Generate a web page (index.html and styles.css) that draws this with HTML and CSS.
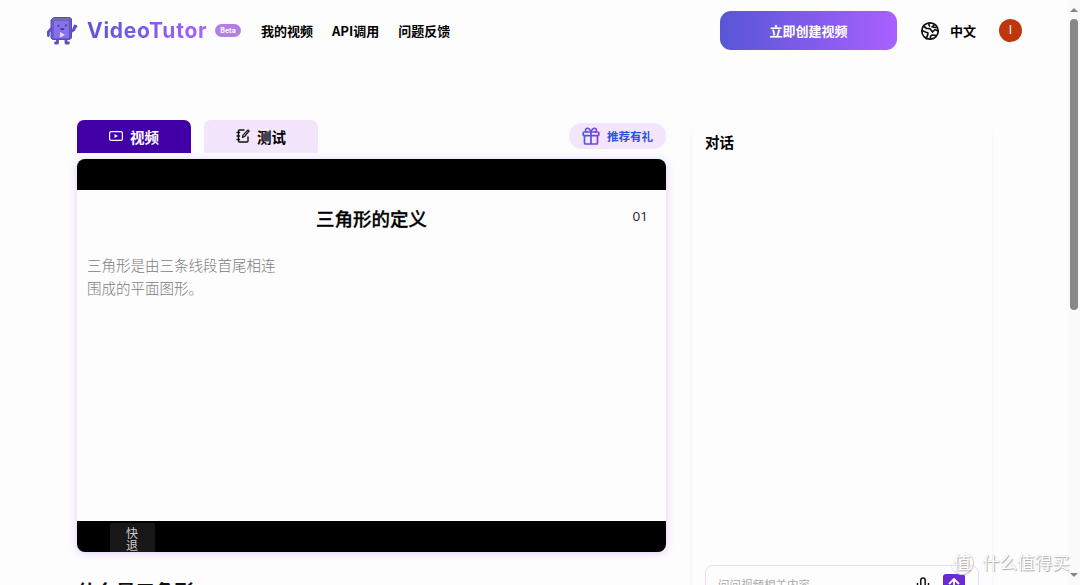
FILE: index.html
```html
<!DOCTYPE html>
<html lang="zh-CN">
<head>
  <meta charset="UTF-8">
  <title>VideoTutor</title>
  <link rel="stylesheet" href="styles.css">
</head>
<body>
  <div class="page">
    <header class="header">
      <a class="logo">
        <svg class="mascot" viewBox="0 0 32 30" width="32" height="30">
          <g fill="none" stroke="#5b4fc4" stroke-width="2.8" stroke-linecap="round" stroke-linejoin="round">
            <path d="M5 13l-2.600 3v3.500" />
            <path d="M25 15.500l3-2 1-3.500M28 12l2-1.500" />
            <path d="M11.500 23v4H9.500M20 23v4h2.500" />
          </g>
          <path d="M5 4l3-2.500h16l1.500 1.500v19l-2 1.500H6.500L5 22z" fill="#6a5bd0" stroke="#5a4bb8" stroke-width="1" />
          <path d="M8 2.200h15.500v2H6.500z" fill="#78709c" />
          <path d="M8 5h15v17H8z" fill="#8b70eb" />
          <path d="M23.500 3.500v19" stroke="#6553c5" stroke-width="1.300" />
          <path d="M12.500 9v1.800M20 8.500v1.800" stroke="#40338e" stroke-width="1.700" />
          <path d="M14 12.200c1 2.800 4 2.500 4.600 0z" fill="#40338e" />
          <path d="M14 16l5 2.800-5 3z" fill="#e0d5ff" />
        </svg>
        <span class="logo-text">VideoTutor</span>
        <span class="beta">Beta</span>
      </a>
      <nav class="nav">
        <a>我的视频</a>
        <a>API调用</a>
        <a>问题反馈</a>
      </nav>
      <div class="header-right">
        <button class="create-btn">立即创建视频</button>
        <div class="lang">
          <svg viewBox="0 0 20 20" width="20" height="20" fill="none" stroke="#111" stroke-width="1.700" stroke-linecap="round" stroke-linejoin="round">
            <circle cx="10" cy="10" r="8.200" />
            <path d="M3.500 5l3 2.500 3.500.2 2.500 3.300 2.500-2.500 3 1.500" />
            <path d="M2 9.500l3.500 1.500 2.500 1-.5 2.500L6 17.500" />
            <path d="M8.500 2.500l1 2.500M14.500 3.500L12 6l4.500.5" />
            <path d="M10.500 18c-.5-2.500.5-4 2.500-4l3.500.5" />
          </svg>
          <span>中文</span>
        </div>
        <span class="avatar">I</span>
      </div>
    </header>

    <main class="content">
      <section class="video-column">
        <div class="toolbar">
          <button class="tab active">
            <svg viewBox="0 0 14 10" width="14" height="10" fill="none" stroke="#fff" stroke-width="1.200">
              <rect x=".6" y=".6" width="12.800" height="8.800" rx="1.500" />
              <path d="M5.500 3l3.500 2-3.500 2z" fill="#fff" stroke="none" />
            </svg>
            <span>视频</span>
          </button>
          <button class="tab">
            <svg viewBox="0 0 14 14" width="14" height="14" fill="none" stroke="#111" stroke-width="1.400" stroke-linecap="round" stroke-linejoin="round">
              <path d="M8 1H3.500Q2.500 1 2.500 2v10q0 1 1 1H11q1 0 1-1V8" />
              <path d="M1 3.500h2.500M1 7h2.500M1 10.500h2.500" />
              <path d="M6.500 8.500l.5-2.300L12 1q1.200 0 1 1.200L8.600 7.500z" stroke-width="1.200" />
            </svg>
            <span>测试</span>
          </button>
          <button class="gift-btn">
            <svg viewBox="0 0 18 18" width="18" height="18" fill="none" stroke="url(#giftStroke)" stroke-width="1.700" stroke-linecap="round" stroke-linejoin="round">
              <defs>
                <linearGradient id="giftStroke" gradientUnits="userSpaceOnUse" x1="1" y1="0" x2="17" y2="0">
                  <stop offset="0" stop-color="#4b5bdc" />
                  <stop offset="1" stop-color="#7b3fdd" />
                </linearGradient>
              </defs>
              <rect x="1.200" y="5" width="15.600" height="3.600" rx="1" />
              <path d="M2.500 8.600V16q0 1 1 1h11q1 0 1-1V8.600M9 5.100L9.010 17" />
              <path d="M9 5C7.500 1 5.500 1 4.500 1.500S3 4 4.500 5M9 5c1.500-4 3.500-4 4.500-3.500S15 4 13.500 5" />
            </svg>
            <span>推荐有礼</span>
          </button>
        </div>

        <div class="player">
          <div class="slide">
            <h1 class="slide-title">三角形的定义</h1>
            <span class="slide-number">01</span>
            <p class="slide-text">三角形是由三条线段首尾相连<br>围成的平面图形。</p>
          </div>
          <div class="player-bar">
            <div class="rewind">快退</div>
          </div>
        </div>

        <h2 class="video-title">什么是三角形</h2>
      </section>

      <aside class="chat">
        <h3>对话</h3>
        <div class="chat-input">
          <span class="placeholder">问问视频相关内容</span>
          <svg class="mic" viewBox="0 0 14 18" width="14" height="18" fill="none" stroke="#111" stroke-width="1.500">
            <rect x="4.800" y="1" width="4.400" height="9" rx="2.200" />
            <path d="M1.500 6v2.500q0 4 5.500 4t5.500-4V6M7 12.500V16" />
          </svg>
          <button class="send">
            <svg viewBox="0 0 12 14" width="12" height="14" fill="none" stroke="#fff" stroke-width="1.800">
              <path d="M1 6l5-5 5 5M6 1v12" />
            </svg>
          </button>
        </div>
      </aside>
    </main>
  </div>

  <div class="scrollbar">
    <span class="arrow-up"></span>
    <span class="thumb"></span>
    <span class="arrow-down"></span>
  </div>

  <div class="watermark"><span class="watermark-badge">值</span><span>什么值得买</span></div>
</body>
</html>
```
FILE: styles.css
```css
* {
  box-sizing: border-box;
}

body {
  margin: 0;
  height: 585px;
  display: flex;
  position: relative;
  overflow: hidden;
  background: #fdfdfd;
  color: #000;
  font-family: "Liberation Sans", "Noto Sans CJK SC", sans-serif;
}

h1, h2, h3, p {
  margin: 0;
}

button {
  border: none;
  padding: 0;
  font-family: inherit;
}

svg {
  flex: none;
}

.page {
  width: 1068px;
  height: 585px;
  overflow: hidden;
}

/* Header */
.header {
  height: 61px;
  padding: 0 46px;
  display: flex;
  align-items: center;
}

.logo {
  display: flex;
  align-items: center;
  width: 215px;
}

.logo-text {
  width: 121px;
  margin-left: 9px;
  font-family: Inter, sans-serif;
  font-size: 21px;
  font-weight: 700;
  letter-spacing: 0.75px;
  line-height: 28px;
  white-space: nowrap;
  background: linear-gradient(90deg, #5856d6, #a960ff);
  -webkit-background-clip: text;
  background-clip: text;
  color: transparent;
}

.beta {
  width: 26px;
  height: 13px;
  margin-left: 7px;
  flex: none;
  border-radius: 7px;
  background: #b27fe9;
  color: #fff;
  font-family: Inter, sans-serif;
  font-size: 7px;
  font-weight: 700;
  line-height: 13px;
  text-align: center;
}

.nav {
  display: flex;
  gap: 19px;
  font-family: "Noto Sans CJK SC", sans-serif;
  font-size: 13px;
  font-weight: 700;
  line-height: 20px;
}

.header-right {
  margin-left: auto;
  display: flex;
  align-items: center;
}

.create-btn {
  width: 177px;
  height: 39px;
  border-radius: 11px;
  background: linear-gradient(90deg, #5856d6, #a960ff);
  color: #fff;
  font-size: 13px;
  font-weight: 700;
}

.lang {
  display: flex;
  align-items: center;
  gap: 10px;
  margin-left: 23px;
  font-size: 13px;
  font-weight: 700;
}

.avatar {
  width: 23px;
  height: 23px;
  margin-left: 23px;
  border-radius: 50%;
  background: #bf360c;
  color: #fff;
  font-family: Roboto, sans-serif;
  font-size: 12px;
  line-height: 23px;
  text-align: center;
}

/* Content */
.content {
  display: flex;
  gap: 26px;
  padding: 59px 0 0 77px;
}

.video-column {
  width: 589px;
}

.toolbar {
  display: flex;
  height: 33px;
}

.tab {
  width: 114px;
  margin-right: 13px;
  padding-bottom: 1px;
  display: flex;
  align-items: center;
  justify-content: center;
  gap: 7px;
  border-radius: 7px 7px 0 0;
  background: #f3e5fb;
  font-size: 14.5px;
  font-weight: 700;
}

.tab.active {
  background: #4100a6;
  color: #fff;
}

.gift-btn {
  width: 97px;
  height: 26px;
  margin: 3px 0 0 auto;
  display: flex;
  align-items: center;
  justify-content: center;
  gap: 7px;
  border-radius: 13px;
  background: #f3e5fb;
  color: #2f50e6;
  font-size: 11.5px;
  font-weight: 700;
}

.player {
  height: 393px;
  margin-top: 6px;
  padding-top: 31px;
  border-radius: 8px;
  background: #000;
  overflow: hidden;
  box-shadow: 0 1px 9px rgba(130, 60, 230, 0.25);
}

.slide {
  height: 331px;
  display: grid;
  grid-template-columns: 1fr auto 1fr;
  grid-template-rows: 58px auto 1fr;
  padding: 0 18px 0 10px;
  background: #fdfdfd;
}

.slide-title {
  grid-column: 2;
  margin-left: 8px;
  font-size: 18.5px;
  font-weight: 500;
  -webkit-text-stroke: 0.3px #000;
  line-height: 60px;
}

.slide-number {
  justify-self: end;
  color: #222;
  font-family: "Open Sans", "Noto Sans", sans-serif;
  font-size: 13.5px;
  line-height: 52px;
}

.slide-text {
  grid-column: 1 / 4;
  margin-top: 5px;
  color: #7c7c7c;
  font-family: "Noto Sans CJK SC", sans-serif;
  font-size: 14.5px;
  font-weight: 300;
  line-height: 23px;
}

.player-bar {
  padding: 2px 0 0 33px;
}

.rewind {
  width: 45px;
  height: 32px;
  padding: 5px 15px 0 16px;
  border-radius: 2px;
  background: #171717;
  color: #ccc;
  font-size: 12px;
  line-height: 12px;
}

.video-title {
  margin-top: 25px;
  color: #111;
  font-size: 19.500px;
  font-weight: 700;
  line-height: 30px;
}

/* Chat */
.chat {
  width: 300px;
  height: 500px;
  margin-top: 3px;
  padding: 10px 13px;
  display: flex;
  flex-direction: column;
  border-radius: 10px;
  box-shadow: 0 1px 3px rgba(0, 0, 0, 0.06);
}

.chat h3 {
  font-size: 14.5px;
  line-height: 20px;
}

.chat-input {
  height: 60px;
  margin-top: 412px;
  padding: 8px 13px 0 12px;
  display: flex;
  flex: none;
  border: 1px solid #ead9fc;
  border-radius: 8px;
}

.placeholder {
  flex: 1;
  color: #aaa;
  font-size: 11.500px;
  line-height: 23px;
}

.mic {
  margin: 3px 13px 0 0;
}

.send {
  width: 22px;
  height: 24px;
  border-radius: 3px;
  background: #6a2bd0;
}

/* Scrollbar */
.scrollbar {
  width: 12px;
  height: 585px;
  padding: 8px 2px 8px;
  display: flex;
  flex-direction: column;
  align-items: center;
  background: #fafafa;
}

.arrow-up,
.arrow-down {
  border: 4px solid transparent;
}

.arrow-up {
  border-top: none;
  border-bottom-color: #858585;
}

.arrow-down {
  margin-top: auto;
  border-bottom: none;
  border-top-color: #858585;
}

.thumb {
  width: 8px;
  height: 291px;
  margin-top: 7px;
  border-radius: 4px;
  background: #888;
}

.watermark {
  position: absolute;
  left: 951px;
  top: 551px;
  display: flex;
  align-items: center;
  gap: 8px;
  color: #fff;
  font-size: 17.500px;
  line-height: 24px;
  text-shadow: 1px 1px 1px #aaa, 0 0 1px #ccc;
}

.watermark-badge {
  width: 23px;
  height: 23px;
  border-right: 1px solid #ccc;
  border-bottom: 1px solid #ccc;
  border-radius: 50%;
  line-height: 22px;
  text-align: center;
}
```
